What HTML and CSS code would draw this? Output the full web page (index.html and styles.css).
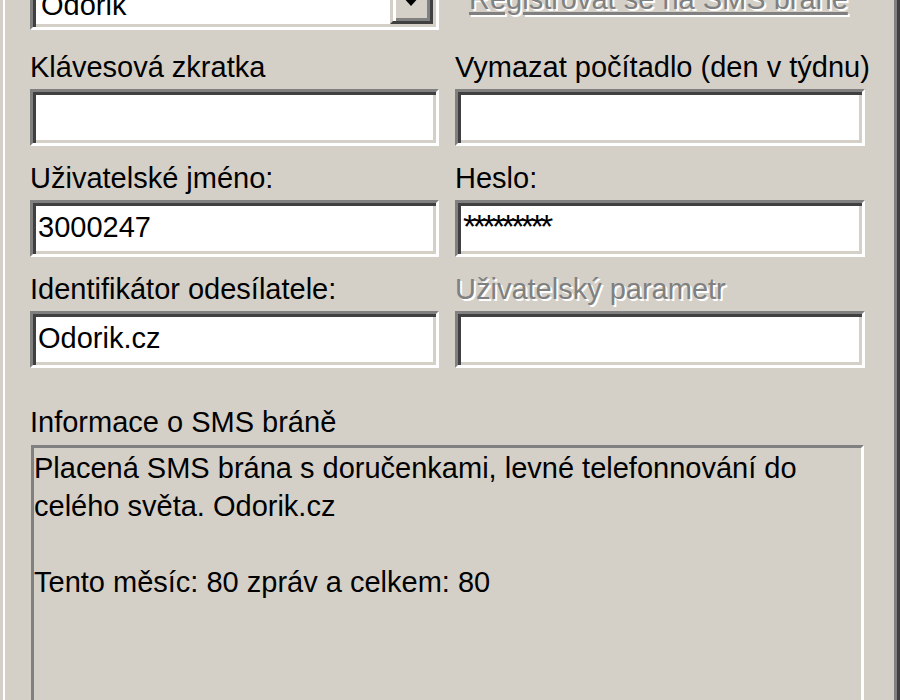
FILE: index.html
```html
<!DOCTYPE html>
<html lang="cs">
<head>
<meta charset="utf-8">
<title>SMS brána</title>
<link rel="stylesheet" href="styles.css">
</head>
<body>
<div class="frame">
  <div class="row-top">
    <div class="combo">
      <span class="combo-text">Odorik</span>
      <span class="combo-btn"><span class="arrow"></span></span>
    </div>
    <div class="link-cell"><span class="link">Registrovat se na SMS bráně</span></div>
  </div>
  <div class="fields">
    <div class="field">
      <div class="label">Klávesová zkratka</div>
      <div class="edit"></div>
    </div>
    <div class="field">
      <div class="label">Vymazat počítadlo (den v týdnu)</div>
      <div class="edit"></div>
    </div>
    <div class="field">
      <div class="label">Uživatelské jméno:</div>
      <div class="edit">3000247</div>
    </div>
    <div class="field">
      <div class="label">Heslo:</div>
      <div class="edit pw">*********</div>
    </div>
    <div class="field">
      <div class="label">Identifikátor odesílatele:</div>
      <div class="edit">Odorik.cz</div>
    </div>
    <div class="field">
      <div class="label disabled">Uživatelský parametr</div>
      <div class="edit"></div>
    </div>
  </div>
  <div class="info">
    <div class="label">Informace o SMS bráně</div>
    <div class="info-box">Placená SMS brána s doručenkami, levné telefonnování do<br>celého světa. Odorik.cz<br><br>Tento měsíc: 80 zpráv a celkem: 80</div>
  </div>
</div>
</body>
</html>
```
FILE: styles.css
```css
html, body {
  margin: 0;
  background: #d4d0c8;
  overflow: hidden;
}

body {
  font-family: "Liberation Sans", Arial, sans-serif;
  font-size: 29px;
  color: #000;
}

.frame {
  margin: -28px 0 0 3px;
  border-left: 2px solid #fff;
  border-right: 3px solid #404040;
  box-shadow: inset -3px 0 0 #808080;
  padding: 0 32px 0 25px;
  min-height: 780px;
}

.row-top {
  display: grid;
  grid-template-columns: 409px 410px;
  column-gap: 16px;
  height: 58px;
}

.combo {
  display: flex;
  height: 58px;
  box-sizing: border-box;
  border: 3px solid;
  border-color: #808080 #fff #fff #808080;
  box-shadow: inset 3px 3px 0 #404040, inset -3px -3px 0 #d4d0c8;
  background: #fff;
  padding: 3px;
}

.combo-text {
  flex: 1;
  padding: 10.5px 0 0 5px;
  line-height: 33px;
}

.combo-btn {
  width: 43px;
  box-sizing: border-box;
  border: 3px solid;
  border-color: #d4d0c8 #404040 #404040 #d4d0c8;
  box-shadow: inset 3px 3px 0 #fff, inset -3px -3px 0 #808080;
  background: #d4d0c8;
  display: flex;
  align-items: center;
  justify-content: center;
}

.arrow {
  width: 0;
  height: 0;
  margin-left: -2px;
  border-left: 9.5px solid transparent;
  border-right: 9.5px solid transparent;
  border-top: 10px solid #000;
}

.link-cell {
  padding: 10.5px 0 0 14px;
  line-height: 33px;
  white-space: nowrap;
}

.link {
  color: #808080;
  text-decoration: underline;
  text-decoration-thickness: 2.5px;
  text-underline-offset: 3px;
  text-shadow: 2px 2px 0 #fff;
}

.fields {
  display: grid;
  grid-template-columns: 409px 410px;
  column-gap: 16px;
  row-gap: 16px;
  margin-top: 20.5px;
}

.field {
  display: flex;
  flex-direction: column;
  gap: 5px;
}

.label {
  line-height: 33px;
  white-space: nowrap;
}

.label.disabled {
  color: #808080;
  text-shadow: 2px 2px 0 #fff;
}

.edit {
  height: 57px;
  box-sizing: border-box;
  border: 3px solid;
  border-color: #808080 #fff #fff #808080;
  box-shadow: inset 3px 3px 0 #404040, inset -3px -3px 0 #d4d0c8;
  background: #fff;
  padding: 8.5px 5px 0 5px;
  line-height: 33px;
  white-space: nowrap;
  overflow: hidden;
}

.edit.pw {
  font-size: 34px;
  letter-spacing: -3.6px;
  padding-top: 7px;
}

.info {
  margin-top: 38px;
}

.info-box {
  margin: 6.5px 1px 0 1px;
  height: 300px;
  border: 3px solid;
  border-color: #808080 #fff #fff #808080;
  line-height: 38px;
  padding: 1px 0 0 0;
  white-space: nowrap;
}
```
